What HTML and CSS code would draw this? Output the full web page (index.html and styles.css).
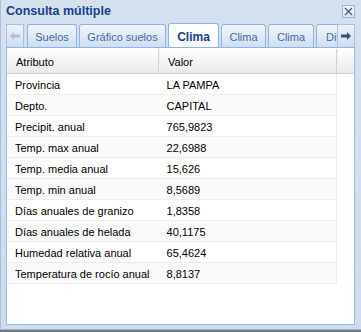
FILE: index.html
```html
<!DOCTYPE html>
<html lang="es">
<head>
    <meta charset="UTF-8">
    <title>Consulta múltiple</title>
    <link rel="stylesheet" href="styles.css">
</head>
<body>
    <div class="window">
        <div class="window-header">
            <span class="window-title">Consulta múltiple</span>
            <span class="tool-close">
                <svg width="11" height="11" viewBox="0 0 11 11"><path d="M2 2 L9 9 M9 2 L2 9" stroke="#4a5c72" stroke-width="1.4" fill="none"/></svg>
            </span>
        </div>

        <div class="tab-strip">
            <div class="scroller scroller-left">
                <svg width="12" height="10" viewBox="0 0 12 10"><path d="M1 5 L5 1 L5 3.5 L11 3.5 L11 6.5 L5 6.5 L5 9 Z" fill="#b4c0cf"/></svg>
            </div>
            <div class="tabs">
                <div class="tab" style="width:50px">Suelos</div>
                <div class="tab" style="width:87px">Gráfico suelos</div>
                <div class="tab tab-active" style="width:51px">Clima</div>
                <div class="tab" style="width:45px">Clima</div>
                <div class="tab" style="width:46px">Clima</div>
                <div class="tab tab-cut" style="width:40px">Div</div>
            </div>
            <div class="scroller scroller-right">
                <svg width="12" height="10" viewBox="0 0 12 10"><path d="M11 5 L7 1 L7 3.5 L1 3.5 L1 6.5 L7 6.5 L7 9 Z" fill="#35557d"/></svg>
            </div>
        </div>

        <div class="panel-body">
            <div class="grid-header">
                <div class="hd-cell col-attr">Atributo</div>
                <div class="hd-cell col-val">Valor</div>
                <div class="hd-cell hd-filler"></div>
            </div>
            <div class="grid-rows">
                <div class="row"><div class="cell col-attr">Provincia</div><div class="cell col-val">LA PAMPA</div></div>
                <div class="row alt"><div class="cell col-attr">Depto.</div><div class="cell col-val">CAPITAL</div></div>
                <div class="row"><div class="cell col-attr">Precipit. anual</div><div class="cell col-val">765,9823</div></div>
                <div class="row alt"><div class="cell col-attr">Temp. max anual</div><div class="cell col-val">22,6988</div></div>
                <div class="row"><div class="cell col-attr">Temp. media anual</div><div class="cell col-val">15,626</div></div>
                <div class="row alt"><div class="cell col-attr">Temp. min anual</div><div class="cell col-val">8,5689</div></div>
                <div class="row"><div class="cell col-attr">Días anuales de granizo</div><div class="cell col-val">1,8358</div></div>
                <div class="row alt"><div class="cell col-attr">Días anuales de helada</div><div class="cell col-val">40,1175</div></div>
                <div class="row"><div class="cell col-attr">Humedad relativa anual</div><div class="cell col-val">65,4624</div></div>
                <div class="row alt"><div class="cell col-attr">Temperatura de rocío anual</div><div class="cell col-val">8,8137</div></div>
            </div>
        </div>
    </div>
</body>
</html>
```

FILE: styles.css
```css
body {
    margin: 0;
    background-color: #6f7b78;
    font-family: "Liberation Sans", Arial, sans-serif;
    font-size: 11px;
}

.window {
    width: 361px;
    height: 330px;
    box-sizing: border-box;
    background: linear-gradient(#d6e1ef, #cddbec);
    border-left: 1px solid #a9bfdc;
    border-bottom: 1px solid #9fb6d6;
    display: flex;
    flex-direction: column;
}

.window-header {
    height: 23px;
    display: flex;
    align-items: center;
    justify-content: space-between;
    padding: 0 6px 0 5px;
}

.window-title {
    color: #15428b;
    font-weight: bold;
    font-size: 12.5px;
    margin-top: -1px;
}

.tool-close {
    width: 11px;
    height: 11px;
    border: 1px solid #9cb4d4;
    background: linear-gradient(#f4f7fb, #d9e4f2);
    display: flex;
    margin-top: -1px;
}

.tab-strip {
    margin: 0 6px 0 5px;
    height: 24px;
    display: flex;
    border-bottom: 1px solid #8db2e3;
}

.scroller {
    width: 18px;
    height: 23px;
    margin-top: 1px;
    display: flex;
    align-items: center;
    justify-content: center;
    background: linear-gradient(#eef3fa, #cfddf0);
    border: 1px solid #a7c0e0;
    border-bottom: none;
    box-sizing: border-box;
}

.scroller-right {
    margin-left: -3px;
    z-index: 2;
}

.tabs {
    flex: 1;
    display: flex;
    gap: 2px;
    padding-left: 3px;
    overflow: hidden;
    align-items: flex-end;
}

.tab {
    flex: none;
    height: 23px;
    box-sizing: border-box;
    border: 1px solid #8db2e3;
    border-bottom: none;
    border-radius: 3px 3px 0 0;
    background: linear-gradient(#f1f5fb, #d0def2);
    color: #416aa3;
    font-size: 11px;
    display: flex;
    align-items: center;
    justify-content: center;
    padding-top: 1px;
}

.tab-active {
    height: 25px;
    margin-bottom: -1px;
    background: linear-gradient(#ffffff, #f7f9fd);
    color: #15428b;
    font-weight: bold;
    font-size: 12px;
}

.tab-cut {
    justify-content: flex-start;
    padding-left: 9px;
}

.panel-body {
    margin: 0 6px 0 5px;
    height: 275px;
    background: #ffffff;
    border: 1px solid #99bbe8;
    border-top: none;
    padding-top: 1px;
}

.grid-header {
    display: flex;
    height: 24px;
    background: linear-gradient(#ffffff, #ebebeb);
    border-bottom: 1px solid #d0d0d0;
}

.hd-cell {
    box-sizing: border-box;
    padding-left: 8px;
    display: flex;
    align-items: center;
    padding-top: 1px;
    border-right: 1px solid #d0d0d0;
    border-left: 1px solid #f4f4f4;
}

.hd-filler {
    flex: 1;
    border-right: none;
}

.col-attr {
    width: 152px;
}

.col-val {
    width: 178px;
}

.row {
    display: flex;
    width: 330px;
    height: 21px;
    box-sizing: border-box;
    border-bottom: 1px solid #ededed;
    border-right: 1px solid #ededed;
}

.row.alt {
    background: #fafafa;
}

.cell {
    box-sizing: border-box;
    padding-left: 8px;
    display: flex;
    align-items: center;
    padding-top: 1px;
}
```
